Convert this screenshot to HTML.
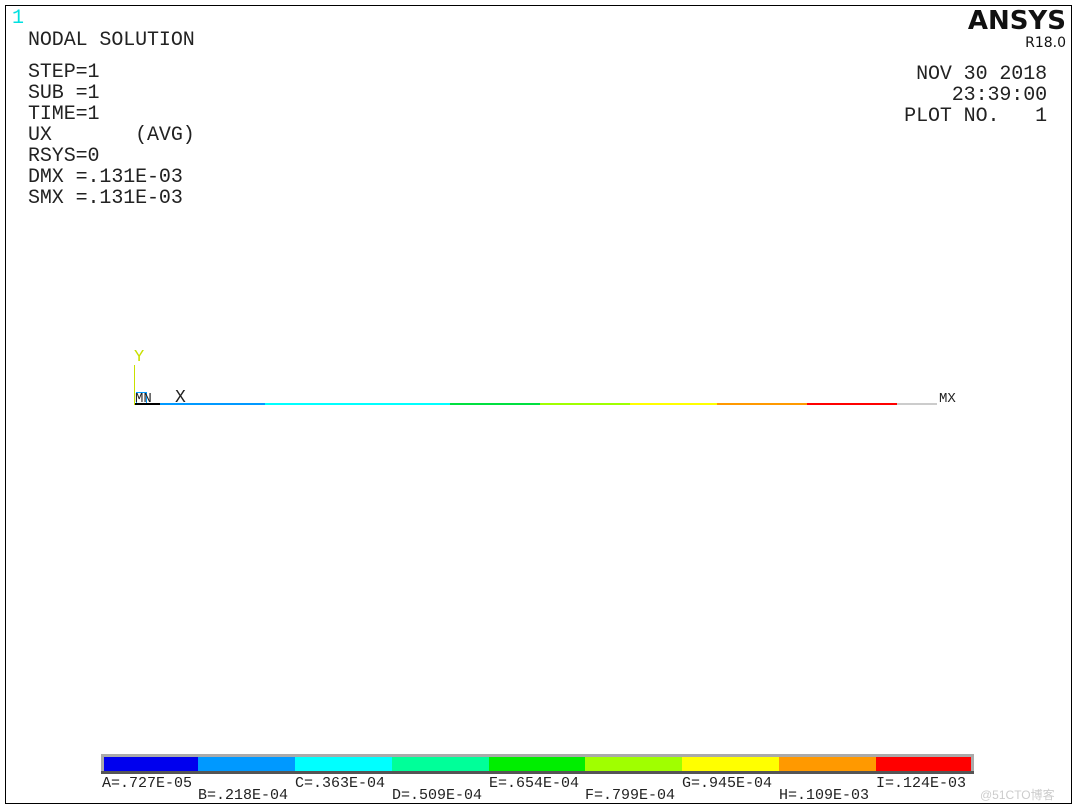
<!DOCTYPE html><html><head><style>
body{margin:0;width:1077px;height:810px;background:#fff;position:relative;overflow:hidden;font-family:"Liberation Mono",monospace;color:#222}
.t{position:absolute;white-space:pre;font-size:20px;line-height:21px;letter-spacing:-0.1px}
.s{position:absolute;white-space:pre;font-size:15px;line-height:15px}
.seg{position:absolute;top:757px;height:14px}
.ln{position:absolute;top:403px;height:2px}
</style></head><body>
<div style="position:absolute;left:5px;top:5px;width:1065px;height:797px;border:1px solid #000"></div>
<div class="t" style="left:12px;top:8px;color:#00e0e0">1</div>
<div class="t" style="left:28px;top:30px">NODAL SOLUTION</div>
<div class="t" style="left:28px;top:62px">STEP=1
SUB =1
TIME=1
UX       (AVG)
RSYS=0
DMX =.131E-03
SMX =.131E-03</div>
<div style="position:absolute;right:11px;top:6px;font:bold 26px 'DejaVu Sans',sans-serif;color:#111">ANSYS</div>
<div style="position:absolute;right:11px;top:35px;font:14px 'DejaVu Sans',sans-serif;color:#111">R18.0</div>
<div class="t" style="right:30px;top:64px;text-align:right">NOV 30 2018
23:39:00
PLOT NO.   1</div>
<div class="t" style="left:134px;top:347px;color:#c8e000;font-size:17px">Y</div>
<div style="position:absolute;left:134px;top:365px;width:1px;height:40px;background:#c8e000"></div>
<div style="position:absolute;left:136px;top:392px;width:9px;height:10px;border:1px solid #0099ff"></div>
<div class="s" style="left:135px;top:392px;font-size:14px">MN</div>
<div class="t" style="left:175px;top:388px;font-size:18px">X</div>
<div class="s" style="left:939px;top:392px;font-size:14px">MX</div>
<div class="ln" style="left:135px;width:25px;background:#000"></div>
<div class="ln" style="left:160px;width:105px;background:#0099ff"></div>
<div class="ln" style="left:265px;width:185px;background:#00ffff"></div>
<div class="ln" style="left:450px;width:90px;background:#00e040"></div>
<div class="ln" style="left:540px;width:90px;background:#a0ff00"></div>
<div class="ln" style="left:630px;width:87px;background:#ffff00"></div>
<div class="ln" style="left:717px;width:90px;background:#ff9900"></div>
<div class="ln" style="left:807px;width:90px;background:#ff0000"></div>
<div class="ln" style="left:897px;width:40px;background:#ccc"></div>
<div style="position:absolute;left:101px;top:754px;width:873px;height:20px;background:#aaa"></div>
<div style="position:absolute;left:101px;top:771px;width:873px;height:3px;background:#555"></div>
<div class="seg" style="left:104px;width:94px;background:#0000ee"></div>
<div class="seg" style="left:198px;width:97px;background:#0099ff"></div>
<div class="seg" style="left:295px;width:97px;background:#00ffff"></div>
<div class="seg" style="left:392px;width:97px;background:#00ff99"></div>
<div class="seg" style="left:489px;width:96px;background:#00ee00"></div>
<div class="seg" style="left:585px;width:97px;background:#a0ff00"></div>
<div class="seg" style="left:682px;width:97px;background:#ffff00"></div>
<div class="seg" style="left:779px;width:97px;background:#ff9900"></div>
<div class="seg" style="left:876px;width:95px;background:#ff0000"></div>
<div class="s" style="left:102px;top:776px">A=.727E-05</div>
<div class="s" style="left:198px;top:788px">B=.218E-04</div>
<div class="s" style="left:295px;top:776px">C=.363E-04</div>
<div class="s" style="left:392px;top:788px">D=.509E-04</div>
<div class="s" style="left:489px;top:776px">E=.654E-04</div>
<div class="s" style="left:585px;top:788px">F=.799E-04</div>
<div class="s" style="left:682px;top:776px">G=.945E-04</div>
<div class="s" style="left:779px;top:788px">H=.109E-03</div>
<div class="s" style="left:876px;top:776px">I=.124E-03</div>
<div style="position:absolute;left:980px;top:786px;font:12px 'Liberation Sans','Noto Sans CJK SC',sans-serif;color:#ccc">@51CTO博客</div>
</body></html>
